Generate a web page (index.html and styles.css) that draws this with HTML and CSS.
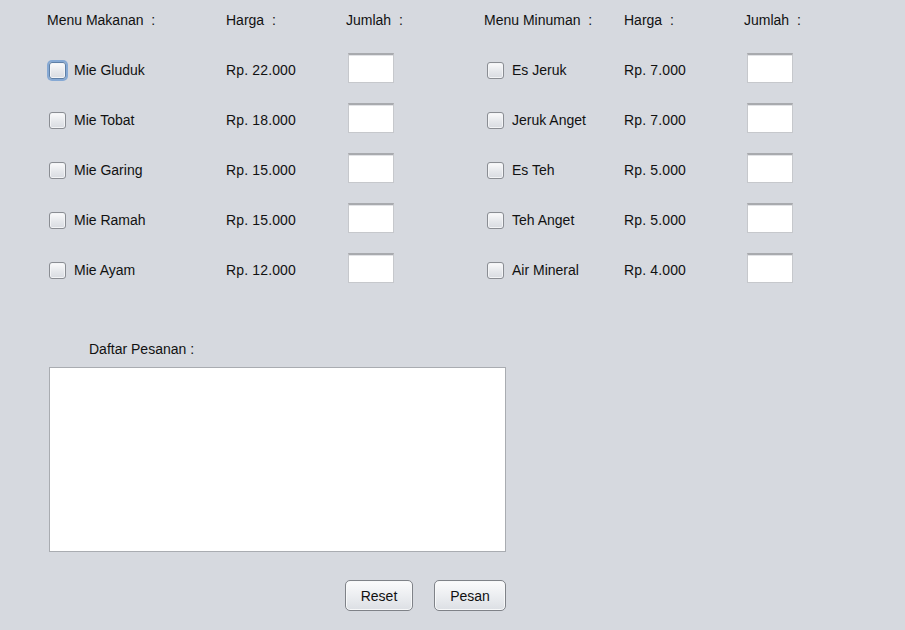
FILE: index.html
```html
<!DOCTYPE html>
<html>
<head>
<meta charset="utf-8">
<link rel="stylesheet" href="styles.css">
</head>
<body>
<div class="frame">
  <div class="menu-grid">
    <div class="hdr">Menu Makanan  :</div>
    <div class="hdr">Harga  :</div>
    <div class="hdr">Jumlah  :</div>
    <div class="hdr">Menu Minuman  :</div>
    <div class="hdr">Harga  :</div>
    <div class="hdr">Jumlah  :</div>

    <div class="item"><span class="cb focus"></span>Mie Gluduk</div>
    <div class="price">Rp. 22.000</div>
    <div class="qty"><span class="field"></span></div>
    <div class="item right"><span class="cb"></span>Es Jeruk</div>
    <div class="price">Rp. 7.000</div>
    <div class="qty right"><span class="field"></span></div>

    <div class="item"><span class="cb"></span>Mie Tobat</div>
    <div class="price">Rp. 18.000</div>
    <div class="qty"><span class="field"></span></div>
    <div class="item right"><span class="cb"></span>Jeruk Anget</div>
    <div class="price">Rp. 7.000</div>
    <div class="qty right"><span class="field"></span></div>

    <div class="item"><span class="cb"></span>Mie Garing</div>
    <div class="price">Rp. 15.000</div>
    <div class="qty"><span class="field"></span></div>
    <div class="item right"><span class="cb"></span>Es Teh</div>
    <div class="price">Rp. 5.000</div>
    <div class="qty right"><span class="field"></span></div>

    <div class="item"><span class="cb"></span>Mie Ramah</div>
    <div class="price">Rp. 15.000</div>
    <div class="qty"><span class="field"></span></div>
    <div class="item right"><span class="cb"></span>Teh Anget</div>
    <div class="price">Rp. 5.000</div>
    <div class="qty right"><span class="field"></span></div>

    <div class="item"><span class="cb"></span>Mie Ayam</div>
    <div class="price">Rp. 12.000</div>
    <div class="qty"><span class="field"></span></div>
    <div class="item right"><span class="cb"></span>Air Mineral</div>
    <div class="price">Rp. 4.000</div>
    <div class="qty right"><span class="field"></span></div>
  </div>

  <div class="order">
    <div class="order-label">Daftar Pesanan :</div>
    <div class="textarea"></div>
    <div class="buttons">
      <button class="btn reset">Reset</button>
      <button class="btn pesan">Pesan</button>
    </div>
  </div>
</div>
</body>
</html>
```

FILE: styles.css
```css
html, body {
  margin: 0;
  padding: 0;
  background: #d6d9df;
}
body {
  font-family: "Liberation Sans", Arial, sans-serif;
  font-size: 14px;
  color: #111;
  width: 905px;
  height: 630px;
  overflow: hidden;
}
.frame {
  padding-left: 47px;
}
.menu-grid {
  display: grid;
  grid-template-columns: 179px 120px 138px 140px 120px 1fr;
  grid-template-rows: 40px repeat(5, 50px);
  align-items: center;
}
.hdr {
  white-space: pre;
  line-height: 16px;
}
.item {
  display: flex;
  align-items: center;
  padding-left: 2px;
  line-height: 16px;
  position: relative;
  top: 5px;
}
.item.right {
  padding-left: 3px;
}
.price {
  line-height: 16px;
  position: relative;
  top: 5px;
  letter-spacing: 0.15px;
}
.qty {
  padding-left: 2px;
  position: relative;
  top: 3px;
  height: 30px;
}
.qty.right {
  padding-left: 3px;
}
.cb {
  display: inline-block;
  box-sizing: border-box;
  width: 17px;
  height: 17px;
  border: 1px solid #8a8d93;
  border-radius: 3px;
  background: linear-gradient(#fbfbfc, #e4e6ea 60%, #d9dce1);
  margin-right: 8px;
  box-shadow: inset 0 0 0 1px #f3f4f6;
}
.cb.focus {
  border-color: #5e7fa6;
  box-shadow: 0 0 0 2px #86a9d4, inset 0 0 0 1px #f3f4f6;
}
.field {
  display: block;
  box-sizing: border-box;
  width: 46px;
  height: 30px;
  background: #fff;
  border: 1px solid #c6c8cc;
  border-top: 2px solid #a8aaae;
  box-shadow: inset 0 1px 0 #e2e3e6;
}
.order {
  padding-left: 2px;
}
.order-label {
  margin-top: 51px;
  margin-left: 40px;
  line-height: 16px;
}
.textarea {
  margin-top: 10px;
  box-sizing: border-box;
  width: 457px;
  height: 185px;
  background: #fff;
  border: 1px solid #a9acb1;
}
.buttons {
  display: flex;
  justify-content: flex-end;
  gap: 21px;
  width: 457px;
  margin-top: 28px;
}
.btn {
  box-sizing: border-box;
  height: 31px;
  font-family: "Liberation Sans", Arial, sans-serif;
  font-size: 14px;
  color: #111;
  border: 1px solid #7f8288;
  border-radius: 5px;
  background: linear-gradient(#fbfbfc, #eceef1 50%, #dcdfe4);
  box-shadow: inset 0 0 0 1px #f7f8f9;
  padding: 0;
  padding-top: 1px;
}
.btn.reset {
  width: 68px;
}
.btn.pesan {
  width: 72px;
}
```
